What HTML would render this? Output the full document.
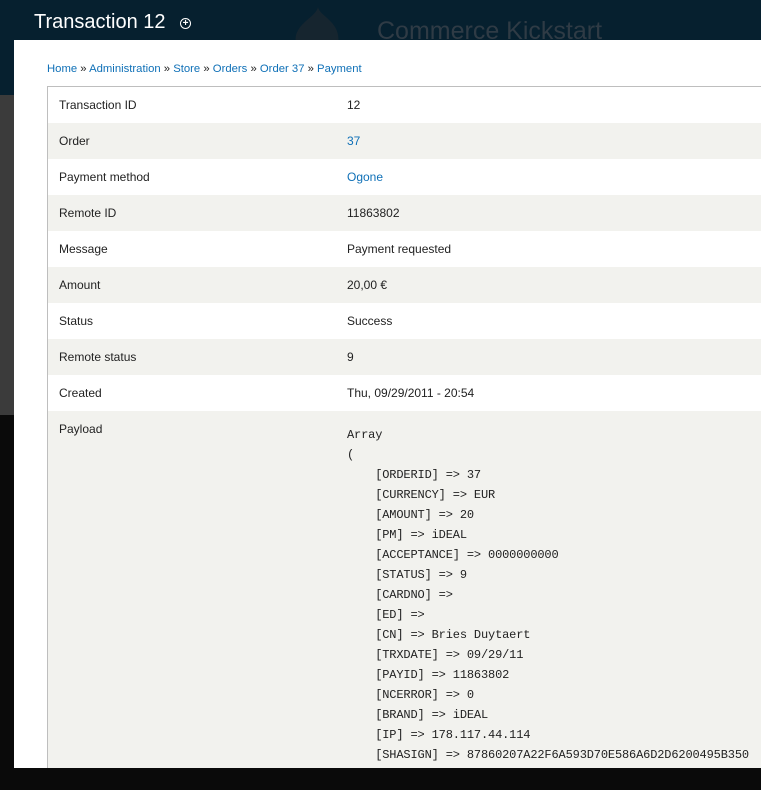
<!DOCTYPE html>
<html><head><meta charset="utf-8"><style>
html,body{margin:0;padding:0;width:761px;height:790px;overflow:hidden;background:#0a0a0a;font-family:"Liberation Sans",sans-serif;}
#hdr{position:absolute;left:0;top:0;width:761px;height:95px;background:#06202f;}
#grey{position:absolute;left:0;top:95px;width:14px;height:320px;background:#3b3b3b;}
#title{position:absolute;left:34px;top:11px;color:#fff;font-size:20px;}
#plus{position:absolute;left:180px;top:18px;width:9px;height:9px;border:1.5px solid #fff;border-radius:50%;color:#fff;font-size:10px;line-height:9px;text-align:center;font-weight:bold;}
#ck{position:absolute;left:377px;top:17px;color:#2f3b45;font-size:25px;}
#drop{position:absolute;left:282px;top:4px;}
#panel{position:absolute;left:14px;top:40px;width:747px;height:728px;background:#fff;}
#bc{position:absolute;left:33px;top:23px;font-size:11.3px;color:#222;}
#bc a{color:#0f70b7;text-decoration:none;}
table{position:absolute;left:33px;top:46px;width:720px;border-collapse:collapse;border-left:1px solid #bebebe;border-top:1px solid #bebebe;font-size:12px;color:#222;}
td{height:36px;padding:0;vertical-align:middle;}
td.l{width:288px;padding-left:11px;}
tr:nth-child(even){background:#f2f2ee;}
a{color:#0f70b7;text-decoration:none;}
pre{margin:0;font-family:"Liberation Mono",monospace;font-size:12px;letter-spacing:-0.15px;line-height:20px;}
</style></head><body>
<div id="hdr"></div>
<div id="grey"></div>
<svg id="drop" width="70" height="36" viewBox="0 0 70 36"><path d="M36 3 C37 12 60 18 56 40 L14 40 C10 20 34 14 36 3Z" fill="#16252f"/></svg>
<div id="ck">Commerce Kickstart</div>
<div id="title">Transaction 12</div>
<div id="plus">+</div>
<div id="panel">
<div id="bc"><a>Home</a> » <a>Administration</a> » <a>Store</a> » <a>Orders</a> » <a>Order 37</a> » <a>Payment</a></div>
<table>
<tr><td class="l">Transaction ID</td><td>12</td></tr>
<tr><td class="l">Order</td><td><a>37</a></td></tr>
<tr><td class="l">Payment method</td><td><a>Ogone</a></td></tr>
<tr><td class="l">Remote ID</td><td>11863802</td></tr>
<tr><td class="l">Message</td><td>Payment requested</td></tr>
<tr><td class="l">Amount</td><td>20,00 €</td></tr>
<tr><td class="l">Status</td><td>Success</td></tr>
<tr><td class="l">Remote status</td><td>9</td></tr>
<tr><td class="l">Created</td><td>Thu, 09/29/2011 - 20:54</td></tr>
<tr><td class="l" style="vertical-align:top;padding-top:11px;height:346px">Payload</td><td style="vertical-align:top;padding-top:14px"><pre>Array
(
    [ORDERID] =&gt; 37
    [CURRENCY] =&gt; EUR
    [AMOUNT] =&gt; 20
    [PM] =&gt; iDEAL
    [ACCEPTANCE] =&gt; 0000000000
    [STATUS] =&gt; 9
    [CARDNO] =&gt;
    [ED] =&gt;
    [CN] =&gt; Bries Duytaert
    [TRXDATE] =&gt; 09/29/11
    [PAYID] =&gt; 11863802
    [NCERROR] =&gt; 0
    [BRAND] =&gt; iDEAL
    [IP] =&gt; 178.117.44.114
    [SHASIGN] =&gt; 87860207A22F6A593D70E586A6D2D6200495B350</pre></td></tr>
</table>
</div>
</body></html>
